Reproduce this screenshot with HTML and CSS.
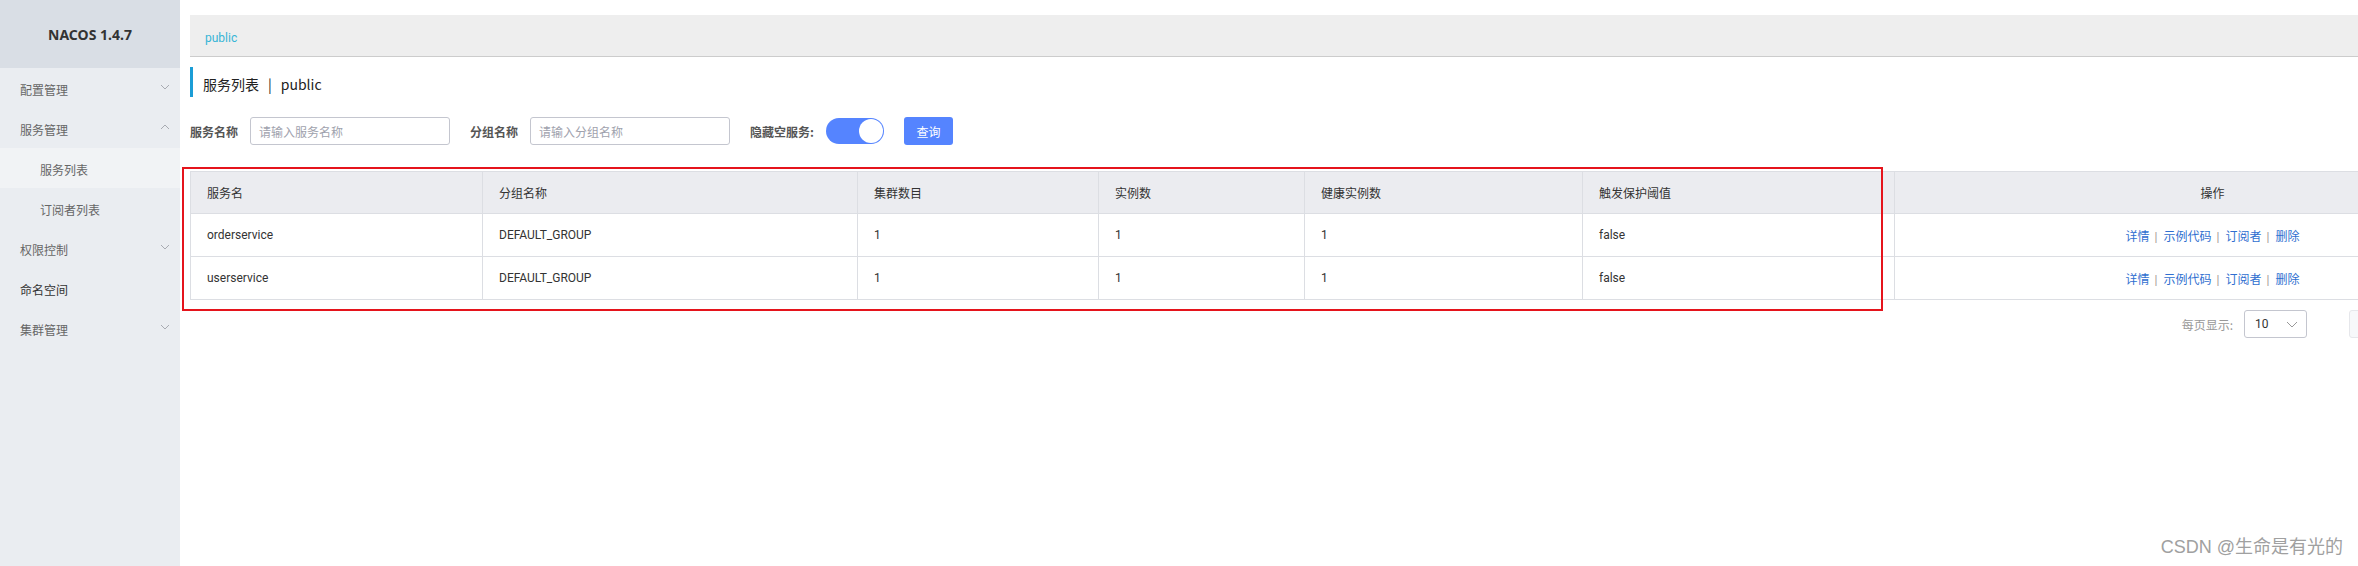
FILE: index.html
```html
<!DOCTYPE html>
<html lang="zh-CN">
<head>
<meta charset="utf-8">
<title>Nacos 服务列表</title>
<link rel="stylesheet" href="styles.css">
</head>
<body>
<div class="app">
  <aside class="sidebar">
    <div class="brand">NACOS 1.4.7</div>
    <ul class="menu">
      <li class="menu-item"><span>配置管理</span><svg class="chev" width="10" height="6" viewBox="0 0 10 6"><polyline points="1,1 5,5 9,1"/></svg></li>
      <li class="menu-item"><span>服务管理</span><svg class="chev" width="10" height="6" viewBox="0 0 10 6"><polyline points="1,5 5,1 9,5"/></svg></li>
      <li class="sub-item active">服务列表</li>
      <li class="sub-item">订阅者列表</li>
      <li class="menu-item"><span>权限控制</span><svg class="chev" width="10" height="6" viewBox="0 0 10 6"><polyline points="1,1 5,5 9,1"/></svg></li>
      <li class="menu-item dark"><span>命名空间</span></li>
      <li class="menu-item"><span>集群管理</span><svg class="chev" width="10" height="6" viewBox="0 0 10 6"><polyline points="1,1 5,5 9,1"/></svg></li>
    </ul>
  </aside>
  <main class="main">
    <div class="breadcrumb"><span class="ns">public</span></div>
    <div class="page-title">服务列表<span class="title-sep">|</span>public</div>
    <div class="filters">
      <label class="f-label">服务名称</label>
      <div class="f-input"><span class="ph">请输入服务名称</span></div>
      <label class="f-label gap">分组名称</label>
      <div class="f-input"><span class="ph">请输入分组名称</span></div>
      <label class="f-label gap">隐藏空服务:</label>
      <div class="switch"><span class="knob"></span></div>
      <button class="btn-primary">查询</button>
    </div>
    <div class="table-wrap">
      <table class="grid">
        <colgroup>
          <col class="c1"><col class="c2"><col class="c3"><col class="c4"><col class="c5"><col class="c6"><col class="c7">
        </colgroup>
        <thead>
          <tr><th>服务名</th><th>分组名称</th><th>集群数目</th><th>实例数</th><th>健康实例数</th><th>触发保护阈值</th><th class="center">操作</th></tr>
        </thead>
        <tbody>
          <tr><td>orderservice</td><td>DEFAULT_GROUP</td><td>1</td><td>1</td><td>1</td><td>false</td>
            <td class="center ops"><a>详情</a><span class="op-sep">|</span><a>示例代码</a><span class="op-sep">|</span><a>订阅者</a><span class="op-sep">|</span><a>删除</a></td></tr>
          <tr><td>userservice</td><td>DEFAULT_GROUP</td><td>1</td><td>1</td><td>1</td><td>false</td>
            <td class="center ops"><a>详情</a><span class="op-sep">|</span><a>示例代码</a><span class="op-sep">|</span><a>订阅者</a><span class="op-sep">|</span><a>删除</a></td></tr>
        </tbody>
      </table>
      <div class="annotation"></div>
    </div>
    <div class="pagination">
      <span class="pg-label">每页显示:</span>
      <div class="pg-select"><span>10</span><svg class="sel-chev" width="12" height="7" viewBox="0 0 12 7"><polyline points="1,1 6,6 11,1"/></svg></div>
      <div class="pager">
        <span class="pg-btn"><svg class="pg-arrow" width="7" height="12" viewBox="0 0 7 12"><polyline points="6,1 1,6 6,11"/></svg></span>
        <span class="pg-btn"><svg class="pg-arrow" width="7" height="12" viewBox="0 0 7 12"><polyline points="1,1 6,6 1,11"/></svg></span>
      </div>
    </div>
  </main>
</div>
<div class="watermark">CSDN @生命是有光的</div>
</body>
</html>
```
FILE: styles.css
```css
html, body {
  margin: 0;
  padding: 0;
  overflow: hidden;
  width: 2358px;
  height: 566px;
  background: #fff;
}
body {
  font-family: Roboto, "Noto Sans CJK SC", sans-serif;
  font-size: 12px;
  color: #333;
  position: relative;
}
.app {
  display: flex;
  width: 2560px;
  height: 566px;
}
.sidebar {
  width: 180px;
  flex: 0 0 180px;
  background: #eaedf1;
  height: 566px;
}
.brand {
  height: 68px;
  line-height: 69px;
  background: #d9dee5;
  text-align: center;
  font-family: "Noto Sans", "Noto Sans CJK SC", sans-serif;
  font-weight: 700;
  font-size: 14px;
  color: #333;
}
.menu {
  list-style: none;
  margin: 0;
  padding: 0;
}
.menu-item, .sub-item {
  height: 40px;
  display: flex;
  align-items: center;
  justify-content: space-between;
  color: #666;
  font-family: "Noto Sans CJK SC", sans-serif;
}
.menu-item {
  padding: 3px 10px 0 20px;
  box-sizing: border-box;
}
.menu-item.dark { color: #333; }
.sub-item {
  padding: 3px 0 0 40px;
  box-sizing: border-box;
}
.sub-item.active { background: #f1f3f5; }
.chev {
  fill: none;
  stroke: #a8abb2;
  stroke-width: 1;
  margin-bottom: 6px;
}
.main {
  flex: 0 0 auto;
  width: 2340px;
  padding: 15px 0 0 10px;
}
.breadcrumb {
  height: 41px;
  line-height: 46px;
  background: #eeeeee;
  border-bottom: 1px solid #cccccc;
  padding-left: 15px;
  width: 2400px;
}
.ns { color: #36b5d6; }
.page-title {
  margin-top: 10px;
  height: 30px;
  line-height: 34px;
  border-left: 3px solid #1b9dd6;
  padding-left: 10px;
  font-size: 14px;
  color: #222;
  font-family: "Noto Sans CJK SC", sans-serif;
}
.title-sep { margin: 0 9px; }
.filters {
  margin-top: 20px;
  height: 28px;
  display: flex;
  align-items: center;
}
.f-label {
  font-weight: 700;
  color: #555;
  margin-right: 12px;
  font-family: "Noto Sans CJK SC", sans-serif;
}
.f-label.gap { margin-left: 20px; }
.f-input {
  width: 200px;
  height: 28px;
  box-sizing: border-box;
  border: 1px solid #c4c6cf;
  border-radius: 3px;
  padding-left: 8px;
  display: flex;
  align-items: center;
}
.ph { color: #a0a2ad; font-family: "Noto Sans CJK SC", sans-serif; }
.switch {
  width: 58px;
  height: 26px;
  border-radius: 13px;
  background: #5584ff;
  display: flex;
  align-items: center;
  justify-content: flex-end;
  padding: 0 1px;
  box-sizing: border-box;
}
.knob {
  width: 24px;
  height: 24px;
  border-radius: 50%;
  background: #fff;
}
.btn-primary {
  margin-left: 20px;
  width: 49px;
  height: 28px;
  border: 0;
  border-radius: 3px;
  background: #5584ff;
  color: #fff;
  font-size: 12px;
  font-family: "Noto Sans CJK SC", sans-serif;
  padding: 0;
}
.table-wrap {
  position: relative;
  margin-top: 26px;
  width: 2340px;
}
.grid {
  border-collapse: collapse;
  width: 2340px;
  table-layout: fixed;
}
.c1 { width: 292px; }
.c2 { width: 375px; }
.c3 { width: 241px; }
.c4 { width: 206px; }
.c5 { width: 278px; }
.c6 { width: 312px; }
.c7 { width: 636px; }
.grid th, .grid td {
  border: 1px solid #dcdee3;
  padding: 0 16px;
  text-align: left;
  font-weight: 400;
  color: #333;
}
.grid th {
  background: #ebecf0;
  height: 41px;
}
.grid td { height: 42px; }
.grid .center { text-align: center; }
.ops a { color: #2f6fd0; }
.op-sep { color: #a49a95; margin: 0 6px 0 5px; }
.annotation {
  position: absolute;
  left: -8px;
  top: -4px;
  width: 1697px;
  height: 140px;
  border: 2px solid #e5141c;
}
.pagination {
  margin-top: 10px;
  width: 2340px;
  height: 28px;
  display: flex;
  align-items: center;
  justify-content: flex-end;
}
.pg-label { color: #999; margin-right: 11px; font-family: "Noto Sans CJK SC", sans-serif; }
.pg-select {
  width: 63px;
  height: 28px;
  box-sizing: border-box;
  border: 1px solid #c4c6cf;
  border-radius: 3px;
  display: flex;
  align-items: center;
  justify-content: space-between;
  padding: 0 8px 0 10px;
  color: #333;
}
.sel-chev { fill: none; stroke: #999; stroke-width: 1; }
.pager {
  margin-left: 42px;
  width: 181px;
  display: flex;
  justify-content: space-between;
}
.pg-btn {
  width: 84px;
  height: 28px;
  box-sizing: border-box;
  border: 1px solid #e6e7eb;
  border-radius: 3px;
  background: #f7f8fa;
  display: flex;
  align-items: center;
  justify-content: center;
}
.pg-arrow { fill: none; stroke: #c4c6cf; stroke-width: 1; }
.watermark {
  position: absolute;
  right: 15px;
  top: 536px;
  font-family: "Liberation Sans", "Noto Sans CJK SC", sans-serif;
  font-size: 18px;
  color: #a0a0a0;
  text-shadow: 0 0 1px #fff;
  line-height: 22px;
}
```
